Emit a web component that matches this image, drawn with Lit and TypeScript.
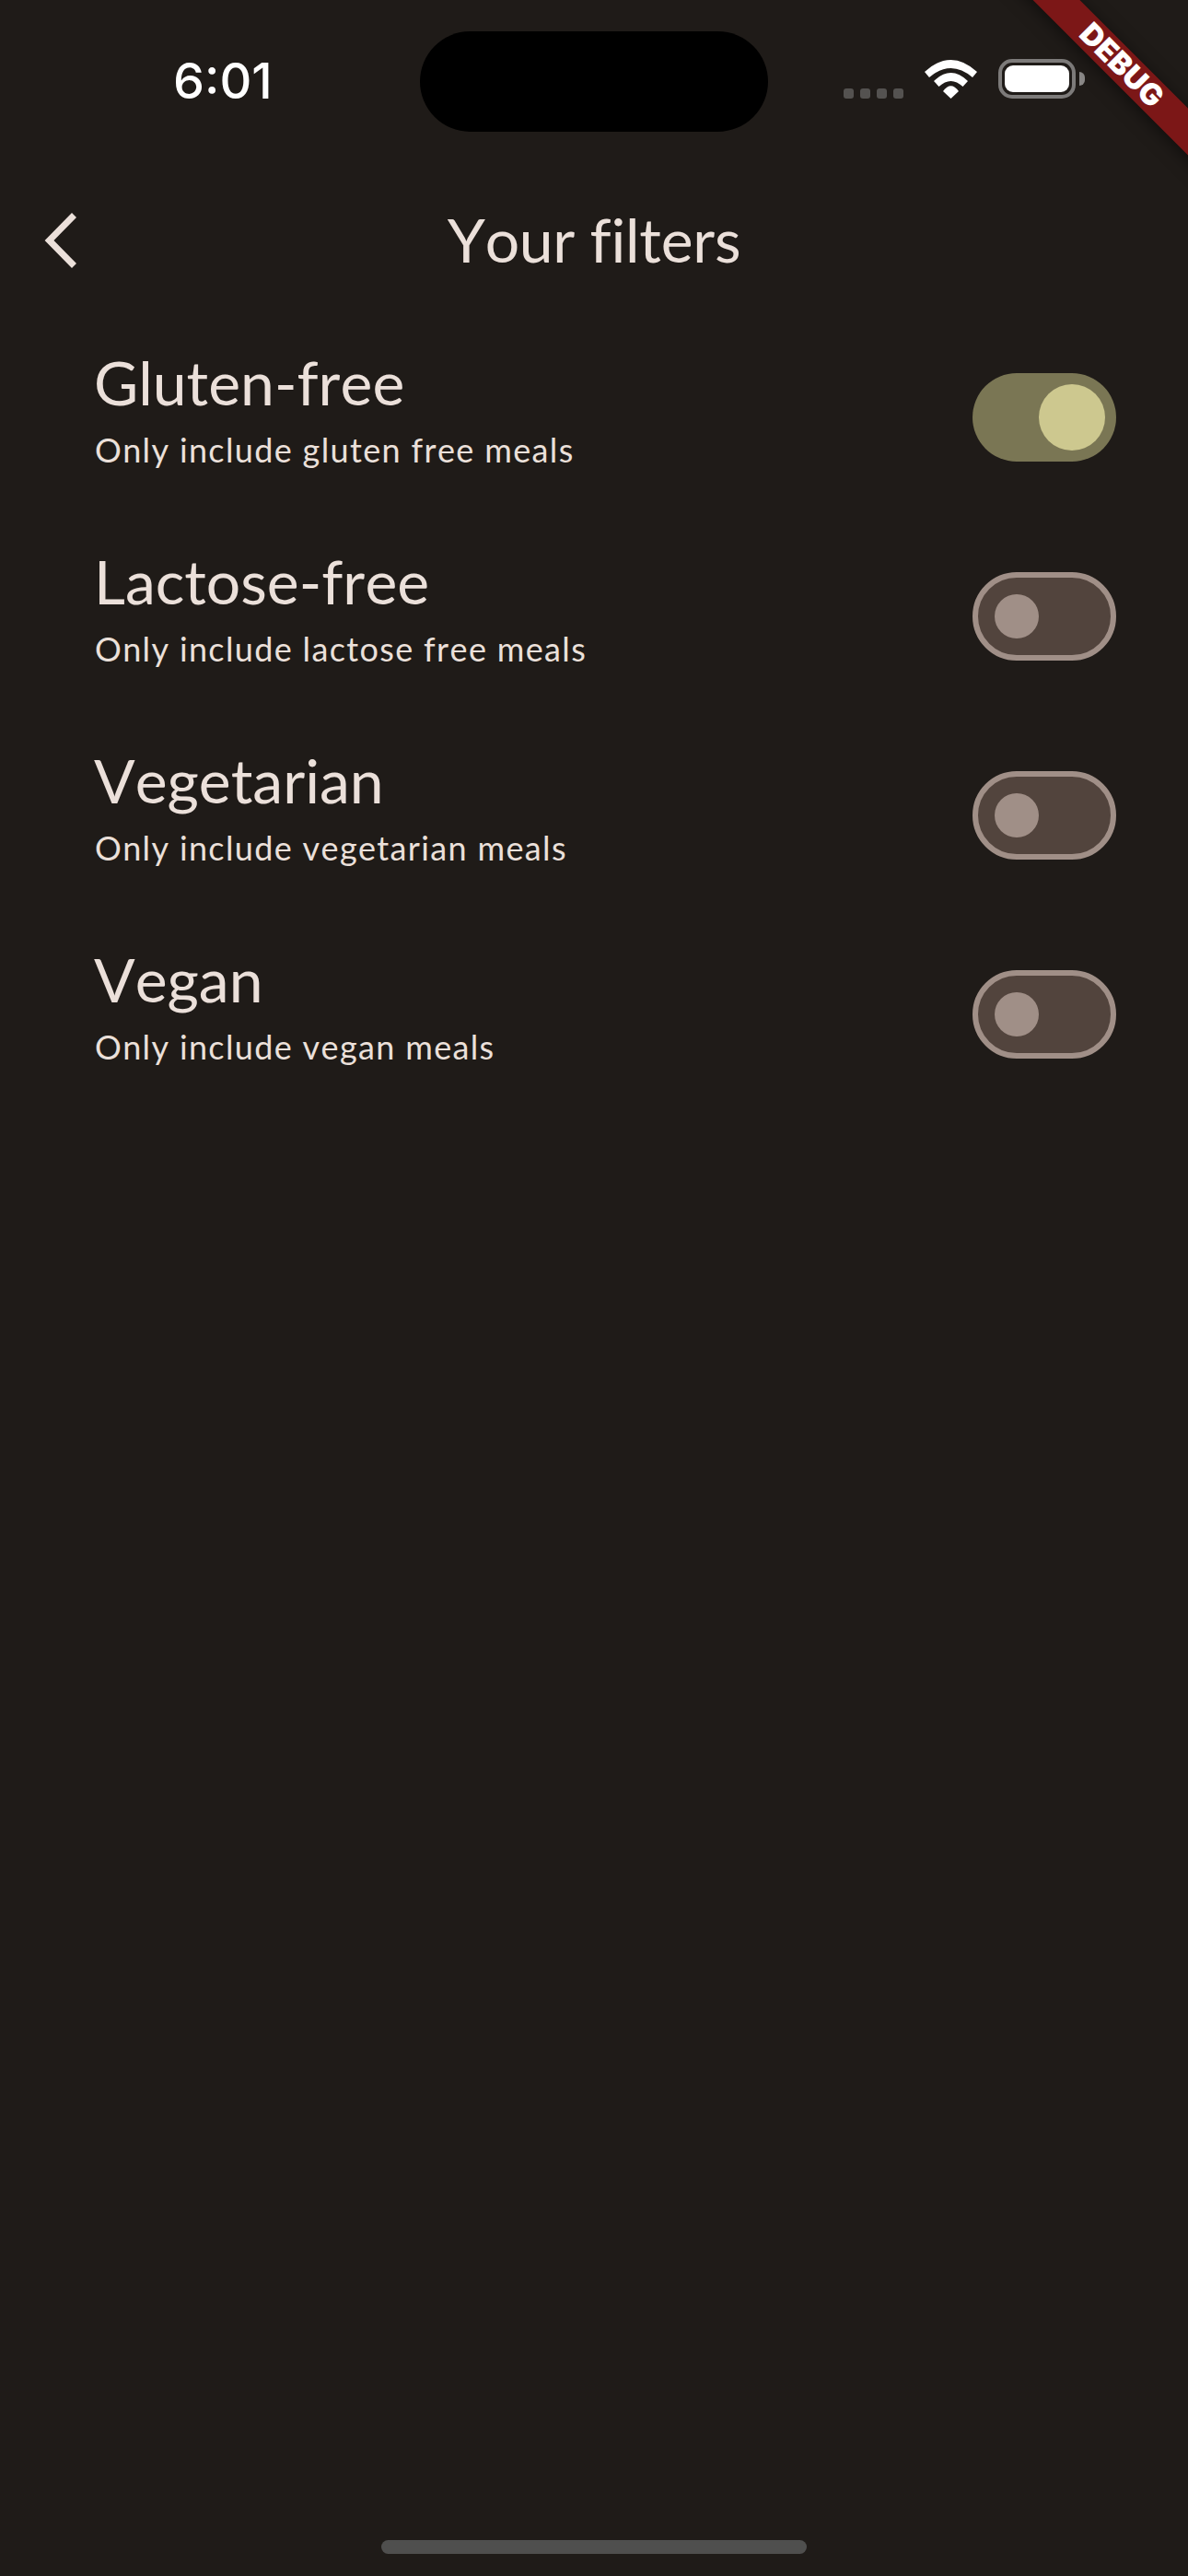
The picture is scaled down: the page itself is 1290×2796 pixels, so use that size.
import { LitElement, html, css, svg } from 'lit';
import { customElement, property } from 'lit/decorators.js';

const FILTERS = [
  { title: 'Gluten-free', subtitle: 'Only include gluten free meals', on: true },
  { title: 'Lactose-free', subtitle: 'Only include lactose free meals', on: false },
  { title: 'Vegetarian', subtitle: 'Only include vegetarian meals', on: false },
  { title: 'Vegan', subtitle: 'Only include vegan meals', on: false },
];

@customElement('filter-switch')
export class FilterSwitch extends LitElement {
  @property({ type: Boolean }) on = false;

  static styles = css`
    :host {
      display: block;
    }

    .track {
      box-sizing: border-box;
      display: flex;
      align-items: center;
      width: 156px;
      height: 96px;
      border-radius: 48px;
      border: 6px solid #a08f87;
      background-color: #52443d;
      padding-left: 18px;
    }

    .thumb {
      width: 48px;
      height: 48px;
      border-radius: 50%;
      background-color: #a08f87;
    }

    .track.on {
      border: none;
      background-color: #7a7654;
      justify-content: flex-end;
      padding: 0 12px 0 0;
    }

    .track.on .thumb {
      width: 72px;
      height: 72px;
      background-color: #cdc88f;
    }
  `;

  render() {
    return html`<div class="track ${this.on ? 'on' : ''}"><div class="thumb"></div></div>`;
  }
}

@customElement('app-root')
export class AppRoot extends LitElement {
  static styles = css`
    :host {
      display: flex;
      flex-direction: column;
      position: relative;
      width: 1290px;
      height: 2796px;
      overflow: hidden;
      background-color: #1f1b18;
      color: #ebe0da;
      font-family: 'Lato', sans-serif;
    }

    .status {
      display: grid;
      grid-template-columns: 456px 378px 1fr;
      height: 177px;
      box-sizing: border-box;
      padding-top: 34px;
    }

    .time {
      padding: 22px 0 0 188px;
      font-family: 'Inter', sans-serif;
      font-size: 54px;
      font-weight: 550;
      line-height: 64px;
      color: #ffffff;
    }

    .island {
      height: 109px;
      border-radius: 55px;
      background-color: #000000;
    }

    .indicators {
      display: flex;
      align-items: flex-end;
      gap: 23px;
      height: 42px;
      padding: 31px 0 0 82px;
    }

    .dots {
      display: flex;
      gap: 7px;
    }

    .dots span {
      width: 11px;
      height: 11px;
      border-radius: 3px;
      background-color: #545250;
    }

    .wifi {
      display: block;
      width: 57px;
      height: 42px;
    }

    .battery {
      display: flex;
      align-items: center;
      gap: 4px;
    }

    .battery-body {
      box-sizing: border-box;
      width: 84px;
      height: 43px;
      padding: 3px;
      border: 4px solid #7d7b7a;
      border-radius: 15px;
    }

    .battery-fill {
      height: 100%;
      border-radius: 9px;
      background-color: #ffffff;
    }

    .battery-cap {
      width: 6px;
      height: 15px;
      border-radius: 0 8px 8px 0;
      background-color: #8a8887;
    }

    .appbar {
      display: grid;
      grid-template-columns: 1fr auto 1fr;
      align-items: center;
      height: 168px;
      padding-left: 40px;
      padding-right: 40px;
    }

    .back {
      display: block;
      width: 50px;
      height: 72px;
    }

    .appbar h1 {
      margin: 0;
      padding-bottom: 3px;
      font-size: 66px;
      font-weight: 400;
      line-height: 82px;
      font-kerning: none;
      letter-spacing: -0.3px;
    }

    .row {
      display: flex;
      justify-content: space-between;
      height: 216px;
      box-sizing: border-box;
      padding: 28px 78px 0 102px;
    }

    .row filter-switch {
      margin-top: 32px;
    }

    .title {
      font-size: 66px;
      line-height: 84px;
      font-kerning: none;
    }

    .subtitle {
      margin-top: 7px;
      padding-left: 1px;
      font-size: 36px;
      line-height: 48px;
      letter-spacing: 1.35px;
      font-kerning: none;
    }

    .home {
      width: 462px;
      height: 15px;
      margin: auto auto 24px;
      border-radius: 8px;
      background-color: #4f4f4e;
    }

    .banner {
      position: absolute;
      left: 1018px;
      top: 53px;
      width: 400px;
      height: 36px;
      transform: rotate(45deg);
      background-color: #7c1717;
      box-shadow: 0 3px 18px rgba(0, 0, 0, 0.5);
      color: #ffffff;
      font-family: 'Inter', sans-serif;
      font-size: 32.5px;
      font-weight: 900;
      line-height: 36px;
      text-align: center;
    }
  `;

  private _wifi() {
    return svg`
      <path d="M0 13Q28.5 -13 57 13L52 19Q28.5 -1 5 19Z" fill="#fff" />
      <path d="M10 23Q28.5 5 47 23L41.5 29Q28.5 17 15.5 29Z" fill="#fff" />
      <path d="M20 34Q28.5 22.6 37 34L28.5 42Z" fill="#fff" />
    `;
  }

  render() {
    return html`
      <div class="status">
        <div class="time">6:01</div>
        <div class="island"></div>
        <div class="indicators">
          <div class="dots"><span></span><span></span><span></span><span></span></div>
          <svg class="wifi" viewBox="0 0 57 42">${this._wifi()}</svg>
          <div class="battery">
            <div class="battery-body"><div class="battery-fill"></div></div>
            <div class="battery-cap"></div>
          </div>
        </div>
      </div>

      <div class="appbar">
        <svg class="back" viewBox="0 0 50 72">
          <polyline points="40.5,8.5 13.5,36 40.5,63.5" fill="none" stroke="#ebe0da" stroke-width="7" />
        </svg>
        <h1>Your filters</h1>
      </div>

      ${FILTERS.map(f => html`
        <div class="row">
          <div>
            <div class="title">${f.title}</div>
            <div class="subtitle">${f.subtitle}</div>
          </div>
          <filter-switch ?on=${f.on}></filter-switch>
        </div>
      `)}

      <div class="home"></div>
      <div class="banner">DEBUG</div>
    `;
  }
}
